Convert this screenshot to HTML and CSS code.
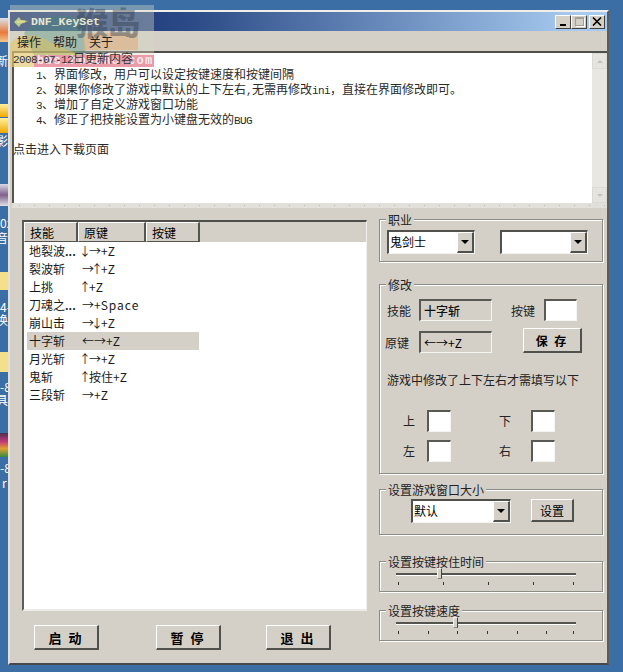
FILE: index.html
```html
<!DOCTYPE html>
<html lang="zh">
<head>
<meta charset="utf-8">
<title>DNF_KeySet</title>
<link rel="stylesheet" href="styles.css">
</head>
<body>
<div class="desk-item di-1"></div>
<div class="desk-item di-2"></div>
<div class="desk-item di-3"></div>
<div class="desk-item di-4"></div>
<div class="desk-item di-5"></div>
<div class="desk-item di-6"></div>
<div class="desk-item di-7"></div>
<div class="desk-label dl-1">新</div>
<div class="desk-label dl-2">影</div>
<div class="desk-label dl-3">0z</div>
<div class="desk-label dl-4">音</div>
<div class="desk-label dl-5">4-</div>
<div class="desk-label dl-6">换</div>
<div class="desk-label dl-7">-8</div>
<div class="desk-label dl-8">具</div>
<div class="desk-label dl-9">-8</div>
<div class="desk-label dl-10">r</div>

<main class="window">
  <header class="titlebar">
    <svg class="app-icon" width="16" height="14" viewBox="0 0 16 14"><path d="M1 7 L6 2 L8 5 L15 6 L8 9 L6 12 Z" fill="#b9cf8a"/><path d="M4 7 L12 6.5" stroke="#e8d890" stroke-width="2"/></svg>
    <span class="title-text">DNF_KeySet</span>
    <div class="caption-btns">
      <span class="cap-btn"><i class="cap-min"></i></span>
      <span class="cap-btn cap-disabled"><i class="cap-max"></i></span>
      <span class="cap-btn cap-close"><svg width="10" height="9" viewBox="0 0 10 9"><path d="M1 0.5 L9 8.5 M9 0.5 L1 8.5" stroke="#000" stroke-width="1.6"/></svg></span>
    </div>
  </header>
  <nav class="menubar">
    <span class="menu-item">操作</span>
    <span class="menu-item">帮助</span>
    <span class="menu-item">关于</span>
  </nav>
  <section class="richedit">
    <div class="rich-text">
      <p class="rich-head"><span class="lat">2008-07-12</span>日更新内容</p>
      <p class="ind"><span class="lat">1</span>、界面修改，用户可以设定按键速度和按键间隔</p>
      <p class="ind"><span class="lat">2</span>、如果你修改了游戏中默认的上下左右<span class="lat">,</span>无需再修改<span class="lat">ini</span>，直接在界面修改即可。</p>
      <p class="ind"><span class="lat">3</span>、增加了自定义游戏窗口功能</p>
      <p class="ind"><span class="lat">4</span>、修正了把技能设置为小键盘无效的<span class="lat">BUG</span></p>
      <p>&nbsp;</p>
      <p>点击进入下载页面</p>
    </div>
    <div class="vscroll">
      <span class="sb-btn"><i class="arrow-up"></i></span>
      <span class="sb-btn"><i class="arrow-down"></i></span>
    </div>
  </section>
  <div class="strip"></div>
  <div class="main">
    <div class="left-col">
      <div class="listview">
        <div class="lv-head">
          <span class="lv-h h1">技能</span>
          <span class="lv-h h2">原键</span>
          <span class="lv-h h3">按键</span>
        </div>
        <div class="lv-body">
          <div class="lv-row"><span class="c1">地裂波<b class="dots">...</b></span><span class="c2"><i class="va">↓</i>→+Z</span></div>
          <div class="lv-row"><span class="c1">裂波斩</span><span class="c2">→<i class="va">↑</i>+Z</span></div>
          <div class="lv-row"><span class="c1">上挑</span><span class="c2"><i class="va">↑</i>+Z</span></div>
          <div class="lv-row"><span class="c1">刀魂之<b class="dots">...</b></span><span class="c2">→+<i class="sp">Space</i></span></div>
          <div class="lv-row"><span class="c1">崩山击</span><span class="c2">→<i class="va">↓</i>+Z</span></div>
          <div class="lv-row selected"><span class="c1">十字斩</span><span class="c2">←→+Z</span></div>
          <div class="lv-row"><span class="c1">月光斩</span><span class="c2"><i class="va">↑</i>→+Z</span></div>
          <div class="lv-row"><span class="c1">鬼斩</span><span class="c2"><i class="va">↑</i>按住+Z</span></div>
          <div class="lv-row"><span class="c1">三段斩</span><span class="c2">→+Z</span></div>
        </div>
      </div>
      <div class="actions">
        <button class="btn action-btn">启 动</button>
        <button class="btn action-btn">暂 停</button>
        <button class="btn action-btn">退 出</button>
      </div>
    </div>
    <div class="right-col">
      <section class="group g-job">
        <span class="legend">职业</span>
        <div class="job-row">
          <div class="combo job-combo"><span class="combo-text">鬼剑士</span><span class="combo-btn"><i class="arrow-down dark"></i></span></div>
          <div class="combo job-combo"><span class="combo-text"></span><span class="combo-btn"><i class="arrow-down dark"></i></span></div>
        </div>
      </section>
      <section class="group g-edit">
        <span class="legend">修改</span>
        <div class="edit-row r1">
          <span class="lab l-skill">技能</span>
          <span class="readonly strong">十字斩</span>
          <span class="lab l-key">按键</span>
          <span class="input in-key"></span>
        </div>
        <div class="edit-row r2">
          <span class="lab l-orig">原键</span>
          <span class="readonly">←→+Z</span>
          <button class="btn save-btn">保 存</button>
        </div>
        <p class="hint">游戏中修改了上下左右才需填写以下</p>
        <div class="dir-grid">
          <span class="lab">上</span><span class="input"></span><span class="lab">下</span><span class="input"></span>
          <span class="lab">左</span><span class="input"></span><span class="lab">右</span><span class="input"></span>
        </div>
      </section>
      <section class="group g-size">
        <span class="legend">设置游戏窗口大小</span>
        <div class="size-row">
          <div class="combo size-combo"><span class="combo-text">默认</span><span class="combo-btn"><i class="arrow-down dark"></i></span></div>
          <button class="btn set-btn">设置</button>
        </div>
      </section>
      <section class="group g-slider">
        <span class="legend">设置按键按住时间</span>
        <div class="slider"><span class="track"></span><span class="thumb t-hold"></span>
          <div class="ticks ticks-hold"><i></i><i></i><i></i><i></i><i></i></div>
        </div>
      </section>
      <section class="group g-slider g-speed">
        <span class="legend">设置按键速度</span>
        <div class="slider"><span class="track"></span><span class="thumb t-speed"></span>
          <div class="ticks ticks-speed"><i></i><i></i><i></i><i></i><i></i><i></i><i></i></div>
        </div>
      </section>
    </div>
  </div>
</main>

<div class="watermark">
  <svg width="144" height="62" viewBox="0 0 144 62">
    <rect width="144" height="62" fill="#d8d6c4" opacity=".4"/>
    <path d="M14 28 C30 8 52 8 72 14 L76 50 L24 50 Z" fill="#3f8a78" opacity=".35"/>
    <path d="M0 62 L0 38 C10 28 26 28 38 36 C50 42 60 46 72 50 L24 50 L24 62 Z" fill="#e8c24a" opacity=".45"/>
    <rect x="73" y="28" width="55" height="17" fill="#e0ab78" opacity=".55"/>
    <text class="wm-logo" x="66" y="30">猴岛</text>
  </svg>
  <span class="wm-strip">bbs.houdao.com</span>
</div>
</body>
</html>
```
FILE: styles.css
```css
* { box-sizing: border-box; }
html, body { margin: 0; padding: 0; }
body {
  position: relative;
  width: 623px;
  height: 672px;
  overflow: hidden;
  background: #3a6ea5;
  font: 12px/15px "Noto Sans CJK SC", "Liberation Sans", sans-serif;
  color: #000;
}
p { margin: 0; }
i { font-style: normal; }
button { font: inherit; color: inherit; padding: 0; }

/* desktop fragments */
.desk-item { position: absolute; left: 0; width: 8px; }
.di-1 { top: 18px; height: 24px; background: linear-gradient(#dbe4ee, #e87a3c 60%, #f0c890); }
.di-2 { top: 104px; height: 13px; background: linear-gradient(#fff2a0, #f0a800); }
.di-3 { top: 118px; height: 15px; background: linear-gradient(#fff2a0, #f0a800); }
.di-4 { top: 184px; height: 22px; background: linear-gradient(#d8d8e8, #80608c 50%, #e0e0e8); }
.di-5 { top: 272px; height: 18px; background: #f4e08a; }
.di-6 { top: 352px; height: 20px; background: #f4e08a; }
.di-7 { top: 433px; height: 24px; background: linear-gradient(#4a3050, #c03878 35%, #e0a030 65%, #2f8a40); }
.desk-label { position: absolute; left: 0; width: 8px; overflow: hidden; color: #fff; font-size: 12px; line-height: 14px; white-space: nowrap; }
.dl-1 { top: 54px; direction: rtl; }
.dl-2 { top: 134px; direction: rtl; }
.dl-3 { top: 216px; }
.dl-4 { top: 231px; direction: rtl; }
.dl-5 { top: 300px; }
.dl-6 { top: 313px; direction: rtl; }
.dl-7 { top: 380px; }
.dl-8 { top: 393px; direction: rtl; }
.dl-9 { top: 461px; }
.dl-10 { top: 476px; left: 2px; }

/* window */
.window {
  position: absolute;
  left: 8px;
  top: 10px;
  width: 601px;
  height: 655px;
  display: flex;
  flex-direction: column;
  background: #d4d0c8;
  border-top: 2px solid #f0efea;
  border-left: 2px solid #e4e1da;
  border-right: 2px solid #5c5c5a;
  border-bottom: 2px solid #46484e;
}
.titlebar {
  height: 19px;
  flex: none;
  display: flex;
  align-items: center;
  padding: 0 2px 0 3px;
  background: linear-gradient(90deg, #0a246a 0%, #2b4a86 30%, #a6caf0 95%);
}
.app-icon { flex: none; position: relative; z-index: 2; }
.title-text {
  position: relative;
  z-index: 2;
  margin-left: 2px;
  font: bold 11.5px/14px "Liberation Mono", monospace;
  color: #e8e8d0;
}
.caption-btns { margin-left: auto; display: flex; align-items: center; }
.cap-btn {
  width: 16px;
  height: 14px;
  display: flex;
  align-items: center;
  justify-content: center;
  background: #d4d0c8;
  border-top: 1px solid #fff;
  border-left: 1px solid #fff;
  border-right: 1px solid #404040;
  border-bottom: 1px solid #404040;
}
.cap-close { margin-left: 2px; }
.cap-min { width: 6px; height: 2px; margin-top: 6px; background: #000; }
.cap-max { width: 9px; height: 9px; border: 1px solid #a0a098; border-top-width: 2px; box-shadow: 1px 1px 0 #fff; }
.menubar {
  height: 20px;
  flex: none;
  display: flex;
  align-items: center;
  padding-left: 7px;
  gap: 12px;
  color: #222;
}
.menu-item { position: relative; z-index: 2; }
.richedit {
  flex: none;
  height: 152px;
  display: flex;
  margin-left: 2px;
  background: #fff;
  border-top: 2px solid #4e4e4a;
  border-left: 2px solid #56564f;
}
.rich-text { flex: 1; margin-left: -1px; color: #2a2a2a; white-space: nowrap; }
.rich-text p { height: 15px; }
.rich-text .rich-head { margin-top: -3px; height: 16px; position: relative; z-index: 2; color: #333; }
.ind { padding-left: 23px; }
.lat { font: 11px/0 "Liberation Mono", monospace; letter-spacing: -0.6px; }
.vscroll {
  flex: none;
  width: 15px;
  display: flex;
  flex-direction: column;
  justify-content: space-between;
  background: #e9e7e2;
}
.sb-btn {
  height: 16px;
  display: flex;
  align-items: center;
  justify-content: center;
  border: 1px solid #dcdad4;
  background: #e6e4de;
}
.arrow-up { width: 0; height: 0; border: 3px solid transparent; border-top: 0; border-bottom: 3px solid #c4c2bc; }
.arrow-down { width: 0; height: 0; border: 3px solid transparent; border-bottom: 0; border-top: 3px solid #c4c2bc; }
.arrow-down.dark { border-width: 4px 4px 0; border-top-color: #000; }
.strip {
  flex: none;
  height: 5px;
  margin-left: 2px;
  background: radial-gradient(circle, #b8b6ae 0.5px, transparent 1px) 0 0 / 15px 5px, #e2e0da;
}

/* main area */
.main { flex: 1; display: flex; padding: 12px 0 0 12px; min-height: 0; }
.left-col { flex: none; width: 345px; display: flex; flex-direction: column; }
.listview {
  height: 391px;
  display: flex;
  flex-direction: column;
  background: #fff;
  border-top: 2px solid #4e4e4a;
  border-left: 2px solid #5c5c58;
  border-right: 1px solid #f2f0ec;
  border-bottom: 2px solid #ecebe6;
}
.lv-head { height: 20px; flex: none; display: flex; background: #d4d0c8; }
.lv-h {
  padding-left: 5px;
  line-height: 19px;
  border-top: 1px solid #fff;
  border-left: 1px solid #fff;
  border-right: 2px solid #55554f;
  border-bottom: 1px solid #55554f;
}
.h1 { width: 54px; }
.h2 { width: 68px; }
.h3 { width: 54px; }
.lv-body { padding: 0 0 0 3px; }
.lv-row { display: flex; height: 18px; line-height: 18px; width: 172px; padding-left: 2px; color: #1a1a1a; }
.lv-row.selected { background: #d4d0c8; }
.c1 { width: 53px; flex: none; white-space: nowrap; }
.c2 { white-space: nowrap; }
.va { margin: 0 -2px 0 -3px; color: #1a1a1a; }
.sp { letter-spacing: 1px; }
.dots { font-weight: bold; font-size: 11px; letter-spacing: 0; }
.actions { display: flex; padding: 14px 0 0 12px; }
.btn {
  background: #d4d0c8;
  border-top: 1px solid #fff;
  border-left: 1px solid #fff;
  border-right: 2px solid #50504c;
  border-bottom: 2px solid #50504c;
}
.action-btn { width: 65px; height: 25px; font-weight: 700; font-size: 13px; letter-spacing: 2px; }
.action-btn + .action-btn { margin-left: 57px; }
.action-btn:last-child { margin-left: 45px; }

/* right column */
.right-col { flex: none; width: 224px; margin-left: 12px; display: flex; flex-direction: column; }
.group {
  position: relative;
  border: 1px solid #8c8c86;
  box-shadow: 1px 1px 0 #fff, inset 1px 1px 0 #fff;
}
.legend {
  position: absolute;
  top: -8px;
  left: 6px;
  padding: 0 2px;
  background: #d4d0c8;
  line-height: 16px;
  white-space: nowrap;
  color: #222;
}
.g-job { height: 43px; padding: 10px 0 0 7px; margin-top: -1px; }
.job-row { display: flex; gap: 25px; }
.combo {
  height: 24px;
  display: flex;
  background: #fff;
  border-top: 2px solid #50504c;
  border-left: 2px solid #50504c;
  border-right: 1px solid #f4f4f0;
  border-bottom: 1px solid #f4f4f0;
}
.job-combo { width: 88px; }
.combo-text { flex: 1; padding-left: 1px; line-height: 20px; }
.combo-btn {
  width: 17px;
  display: flex;
  align-items: center;
  justify-content: center;
  background: #d4d0c8;
  border-top: 1px solid #fff;
  border-left: 1px solid #fff;
  border-right: 2px solid #50504c;
  border-bottom: 2px solid #50504c;
}
.g-edit { height: 190px; margin-top: 22px; }
.lab { line-height: 21px; white-space: nowrap; color: #222; }
.edit-row { display: flex; align-items: center; }
.r1 { padding: 14px 0 0 7px; }
.r2 { padding: 10px 0 0 5px; }
.readonly {
  height: 22px;
  width: 73px;
  line-height: 19px;
  padding-left: 3px;
  white-space: nowrap;
  border-top: 2px solid #5a5a54;
  border-left: 2px solid #5a5a54;
  border-right: 1px solid #f4f4f0;
  border-bottom: 1px solid #f4f4f0;
}
.strong { font-weight: 500; color: #111; }
.l-skill { width: 32px; }
.l-orig { width: 34px; }
.l-key { margin-left: 19px; width: 33px; }
.input {
  display: block;
  height: 22px;
  background: #fff;
  border-top: 2px solid #5a5a54;
  border-left: 2px solid #5a5a54;
  border-right: 1px solid #f4f4f0;
  border-bottom: 1px solid #f4f4f0;
}
.in-key { width: 33px; }
.save-btn { width: 59px; height: 25px; margin-left: 31px; font-weight: 700; letter-spacing: 2px; margin-top: -3px; }
.hint { padding: 19px 0 0 7px; color: #222; white-space: nowrap; }
.dir-grid {
  display: grid;
  grid-template-columns: 24px 24px 80px 24px;
  grid-auto-rows: 22px;
  row-gap: 8px;
  padding: 23px 0 0 23px;
}
.dir-grid .lab:nth-child(3), .dir-grid .lab:nth-child(7) { padding-left: 48px; }
.g-size { height: 46px; margin-top: 15px; padding: 9px 0 0 31px; }
.size-row { display: flex; }
.size-combo { width: 100px; }
.set-btn { width: 43px; height: 23px; margin-left: 20px; }
.g-slider { height: 31px; margin-top: 26px; }
.g-speed { margin-top: 18px; }
.slider { position: relative; height: 100%; padding: 11px 0 0 16px; }
.track { display: block; width: 180px; height: 2px; background: #55554f; box-shadow: 0 1px 0 #fff; }
.thumb {
  position: absolute;
  top: 6px;
  width: 5px;
  height: 11px;
  background: #d4d0c8;
  border: 1px solid #f0f0ec;
  border-right-color: #444;
  border-bottom-color: #888;
}
.t-hold { left: 57px; }
.t-speed { left: 73px; }
.ticks { display: grid; padding-left: 2px; margin-top: 7px; }
.ticks i { display: block; width: 1px; height: 3px; background: #333; }
.ticks-hold { grid-template-columns: 45px 45px 45px 40px 1px; }
.ticks-speed { grid-template-columns: 30px 29px 30px 30px 29px 27px 1px; }

/* watermark overlay */
.watermark { position: absolute; z-index: 1; left: 10px; top: 5px; width: 144px; height: 62px; pointer-events: none; }
.watermark svg { display: block; position: absolute; left: 0; top: 0; }
.wm-logo { font: 900 32px "Noto Sans CJK SC", sans-serif; fill: #2d3a4a; opacity: .4; }
.wm-strip {
  position: absolute;
  left: 24px;
  bottom: 0;
  width: 120px;
  height: 12px;
  padding-left: 3px;
  background: rgba(232, 70, 105, .5);
  color: rgba(255, 255, 255, .8);
  font: bold 12px/13px "Liberation Mono", monospace;
  letter-spacing: 1.1px;
  white-space: nowrap;
  overflow: hidden;
}
```
